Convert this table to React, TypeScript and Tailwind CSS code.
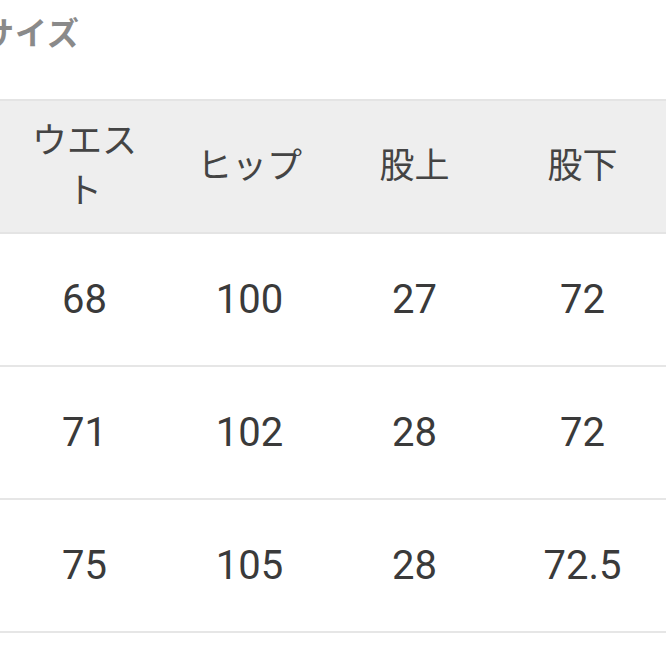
import React from "react";

const headers = ["ウエスト", "ヒップ", "股上", "股下"];
const rows = [
  ["68", "100", "27", "72"],
  ["71", "102", "28", "72"],
  ["75", "105", "28", "72.5"],
];

export default function App() {
  return (
    <div
      className="w-[666px] h-[666px] overflow-hidden bg-white text-[#333]"
      style={{ fontFamily: 'Roboto, "Noto Sans CJK JP", sans-serif' }}
    >
      <div className="h-[99px] pt-[14px] -ml-[18px]">
        <h2 className="text-[32px] font-bold text-[#8a8a8a] leading-[40px] tracking-[1px]">
          サイズ
        </h2>
      </div>

      <div className="border-t-2 border-[#e4e4e4]">
        <div className="grid grid-cols-[165px_165px_165px_171px] pl-[2px] h-[133px] bg-[#eeeeee] border-b-2 border-[#e4e4e4]">
          {headers.map((h) => (
            <div
              key={h}
              className="flex items-center justify-center px-[14px] text-center text-[35px] leading-[50px] text-[#444]"
            >
              {h}
            </div>
          ))}
        </div>
        {rows.map((r, i) => (
          <div
            key={i}
            className="grid grid-cols-[165px_165px_165px_171px] pl-[2px] h-[133px] border-b-2 border-[#e6e6e6]"
          >
            {r.map((v, j) => (
              <div
                key={j}
                className="flex items-center justify-center text-[40px] text-[#3a3a3a]"
              >
                {v}
              </div>
            ))}
          </div>
        ))}
      </div>
    </div>
  );
}
